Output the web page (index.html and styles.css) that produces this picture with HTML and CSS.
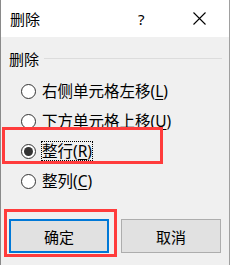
FILE: index.html
```html
<!DOCTYPE html>
<html>
<head>
  <title>删除</title>
  <link rel="stylesheet" href="styles.css">
</head>
<body>
  <div class="dialog">
    <div class="titlebar">
      <span class="title">删除</span>
      <span class="help">?</span>
      <span class="close">
        <svg width="13" height="13" viewBox="0 0 13 13"><path d="M0.5 0.5 L12.5 12.5 M12.5 0.5 L0.5 12.5" stroke="#000" stroke-width="1.1" fill="none"/></svg>
      </span>
    </div>
    <div class="content">
      <div class="group-head">
        <span>删除</span>
        <div class="rule"></div>
      </div>
      <div class="options">
        <div class="option"><span class="radio"></span><span class="label">右侧单元格左移(<u>L</u>)</span></div>
        <div class="option"><span class="radio"></span><span class="label">下方单元格上移(<u>U</u>)</span></div>
        <div class="option"><span class="radio checked"></span><span class="label focus">整行(<u>R</u>)</span></div>
        <div class="option"><span class="radio"></span><span class="label">整列(<u>C</u>)</span></div>
      </div>
      <div class="buttons">
        <button class="btn btn-default">确定</button>
        <button class="btn">取消</button>
      </div>
    </div>
    <div class="mark mark-row"></div>
    <div class="mark mark-ok"></div>
  </div>
</body>
</html>
```

FILE: styles.css
```css
body {
  margin: 0;
  background: #f0f0f0;
  font-family: "Noto Sans", "Noto Sans CJK SC", sans-serif;
  font-size: 15px;
  color: #000;
}

.dialog {
  position: relative;
  width: 228px;
  height: 265px;
  border-left: 1px solid #8a8a8a;
  border-right: 1px solid #a0a0a0;
  background: #f0f0f0;
}

.titlebar {
  height: 37px;
  background: #fff;
  display: flex;
  align-items: center;
}

.title {
  margin-left: 9px;
  line-height: 20px;
}

.help {
  margin-left: 98px;
  line-height: 20px;
}

.close {
  margin-left: 48px;
  display: flex;
}

.content {
  padding-top: 11px;
}

.group-head {
  display: flex;
  align-items: center;
  height: 20px;
  padding-left: 8px;
}

.rule {
  flex: 1;
  height: 1px;
  background: #dcdcdc;
  margin-left: 5px;
  margin-right: 7px;
}

.options {
  margin-top: 8px;
}

.option {
  display: flex;
  align-items: center;
  height: 30px;
  padding-left: 20px;
}

.radio {
  box-sizing: border-box;
  width: 15px;
  height: 15px;
  border: 1px solid #333;
  border-radius: 50%;
  background: #fff;
  margin-right: 6px;
  display: flex;
  align-items: center;
  justify-content: center;
}

.radio.checked::after {
  content: "";
  width: 9px;
  height: 9px;
  border-radius: 50%;
  background: #333;
}

.label {
  font-size: 15.5px;
  line-height: 20px;
  white-space: nowrap;
}

.label u {
  text-underline-offset: 2px;
}

.focus {
  outline: 1px dotted #000;
  outline-offset: -1px;
  padding: 0 1px;
  margin-left: -1px;
}

.buttons {
  display: flex;
  gap: 12px;
  margin-top: 23px;
  padding-left: 8px;
}

.btn {
  box-sizing: border-box;
  width: 100px;
  height: 34px;
  background: #e1e1e1;
  border: 1px solid #adadad;
  font-family: "Noto Sans", "Noto Sans CJK SC", sans-serif;
  font-size: 15px;
  color: #000;
  padding: 0;
}

.btn-default {
  border: 2px solid #0078d7;
}

.mark {
  position: absolute;
  box-sizing: border-box;
  border: 3px solid #ff3c3c;
}

.mark-row {
  left: 1px;
  top: 127px;
  width: 161px;
  height: 37px;
}

.mark-ok {
  left: 3px;
  top: 209px;
  width: 113px;
  height: 48px;
}
```
